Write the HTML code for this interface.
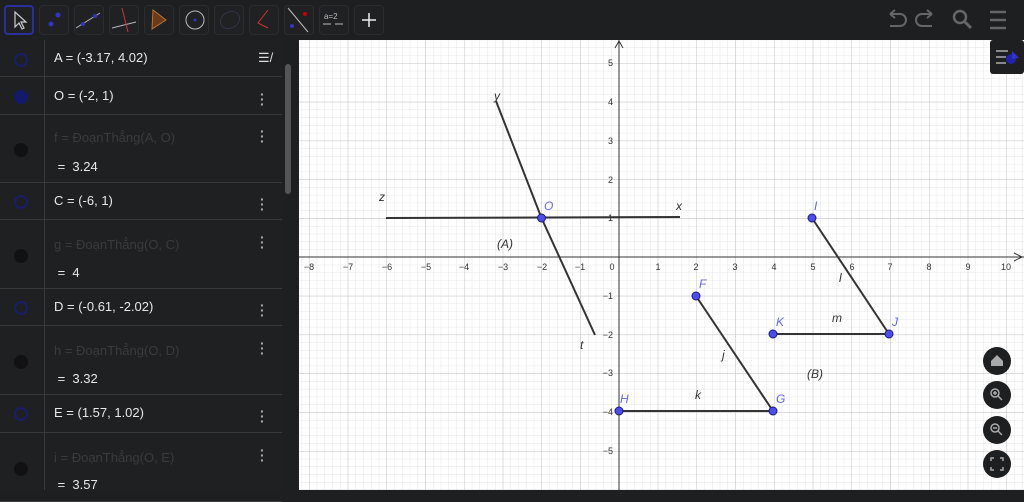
<!DOCTYPE html><html><head><meta charset="utf-8"><style>
*{margin:0;padding:0;box-sizing:border-box}
body{width:1024px;height:490px;overflow:hidden;background:#1e1f20;font-family:"Liberation Sans",sans-serif;position:relative}
#tb{position:absolute;left:0;top:0;width:1024px;height:40px;background:#1e1f20}
.btn{position:absolute;top:5px;width:30px;height:30px;border:1px solid #2c2d2f;border-radius:4px;background:#202123}
#alg{position:absolute;left:0;top:40px;width:282px;height:450px;background:#1f2022}
.row{position:absolute;left:0;width:282px;border-bottom:1px solid #38393b}
.row .t{position:absolute;left:54px;color:#e8e8e8;font-size:13px}
.row .g{color:#3a3b3d}
.row .dot{position:absolute;left:14px;width:14px;height:14px;border-radius:50%}
.row .m{position:absolute;left:260px;color:#aaa;font-size:14px;font-weight:bold;line-height:5px;width:4px}
#div{position:absolute;left:44px;top:40px;width:1px;height:450px;background:#38393b}
#sb{position:absolute;left:285px;top:64px;width:6px;height:130px;background:#555;border-radius:3px}
.zb{position:absolute;left:983px;width:28px;height:28px;border-radius:50%;background:#1e1f20}
</style></head><body>
<div id="tb">
<div class="btn" style="left:4px;border:2px solid #2a2fa0"></div>
<div class="btn" style="left:39px"></div><div class="btn" style="left:74px"></div><div class="btn" style="left:109px"></div><div class="btn" style="left:144px"></div><div class="btn" style="left:179px"></div><div class="btn" style="left:214px"></div><div class="btn" style="left:249px"></div><div class="btn" style="left:284px"></div><div class="btn" style="left:319px"></div><div class="btn" style="left:354px"></div>
</div>
<svg style="position:absolute;left:0;top:0" width="400" height="40">
<path d="M15 12 L15 27 L19 23 L22 29 L24 28 L21 22 L26 22 Z" fill="none" stroke="#ccc" stroke-width="1.2"/>
<circle cx="51" cy="24" r="2.5" fill="#33c"/><circle cx="58" cy="15" r="2.5" fill="#33c"/>
<line x1="76" y1="28" x2="100" y2="13" stroke="#bbb"/><circle cx="83" cy="24" r="2" fill="#33c"/><circle cx="95" cy="16" r="2" fill="#33c"/>
<line x1="112" y1="28" x2="136" y2="22" stroke="#bbb"/><line x1="122" y1="8" x2="128" y2="32" stroke="#c33"/>
<path d="M153 10 L166 20 L152 29 Z" fill="#6b3a1a" stroke="#b87333"/>
<circle cx="195" cy="20" r="9" fill="none" stroke="#bbb"/><circle cx="195" cy="20" r="1.5" fill="#33c"/>
<ellipse cx="230" cy="20" rx="10" ry="8" fill="none" stroke="#334" transform="rotate(-30 230 20)"/>
<path d="M268 10 L258 23 L268 28" fill="none" stroke="#c33"/>
<line x1="288" y1="8" x2="308" y2="32" stroke="#bbb"/><circle cx="305" cy="14" r="2" fill="#c00"/><circle cx="292" cy="26" r="2" fill="#33c"/>
<text x="324" y="19" fill="#bbb" font-size="8">a=2</text><line x1="323" y1="24" x2="331" y2="24" stroke="#bbb"/><line x1="335" y1="24" x2="343" y2="24" stroke="#bbb"/>
<path d="M369 13 V27 M362 20 H376" stroke="#eee" stroke-width="1.5"/>
</svg>
<svg style="position:absolute;left:880;top:0;left:880px" width="144" height="40">
<path d="M10 14 H20 A6 6 0 0 1 20 26 H10 M10 14 L15 10 M10 14 L15 18" fill="none" stroke="#666" stroke-width="2"/>
<path d="M52 14 H42 A6 6 0 0 0 42 26 H52 M52 14 L47 10 M52 14 L47 18" fill="none" stroke="#666" stroke-width="2"/>
<circle cx="80" cy="17" r="6" fill="none" stroke="#666" stroke-width="2.5"/><line x1="85" y1="22" x2="91" y2="28" stroke="#666" stroke-width="3"/>
<path d="M110 12 H126 M110 20 H126 M110 28 H126" stroke="#666" stroke-width="2.5"/>
</svg>
<div id="alg">
<div class="row" style="top:0;height:37px"><div class="dot" style="top:13px;border:2px solid #1a1d6a"></div><div class="t" style="top:10px">A = (-3.17, 4.02)</div></div>
<div class="row" style="top:37px;height:38px"><div class="dot" style="top:13px;background:#141a6a"></div><div class="t" style="top:11px">O = (-2, 1)</div><div class="m" style="top:15px">·<br>·<br>·</div></div>
<div class="row" style="top:75px;height:68px"><div class="dot" style="top:28px;background:#111"></div><div class="t g" style="top:15px">f = ĐoạnThẳng(A, O)</div><div class="t" style="top:44px">&nbsp;=&nbsp; 3.24</div><div class="m" style="top:14px">·<br>·<br>·</div></div>
<div class="row" style="top:143px;height:37px"><div class="dot" style="top:12px;border:2px solid #1a1d6a"></div><div class="t" style="top:10px">C = (-6, 1)</div><div class="m" style="top:14px">·<br>·<br>·</div></div>
<div class="row" style="top:180px;height:69px"><div class="dot" style="top:29px;background:#111"></div><div class="t g" style="top:17px">g = ĐoạnThẳng(O, C)</div><div class="t" style="top:45px">&nbsp;=&nbsp; 4</div><div class="m" style="top:15px">·<br>·<br>·</div></div>
<div class="row" style="top:249px;height:37px"><div class="dot" style="top:12px;border:2px solid #1a1d6a"></div><div class="t" style="top:10px">D = (-0.61, -2.02)</div><div class="m" style="top:14px">·<br>·<br>·</div></div>
<div class="row" style="top:286px;height:69px"><div class="dot" style="top:29px;background:#111"></div><div class="t g" style="top:17px">h = ĐoạnThẳng(O, D)</div><div class="t" style="top:45px">&nbsp;=&nbsp; 3.32</div><div class="m" style="top:15px">·<br>·<br>·</div></div>
<div class="row" style="top:355px;height:38px"><div class="dot" style="top:12px;border:2px solid #1a1d6a"></div><div class="t" style="top:10px">E = (1.57, 1.02)</div><div class="m" style="top:14px">·<br>·<br>·</div></div>
<div class="row" style="top:393px;height:69px"><div class="dot" style="top:29px;background:#111"></div><div class="t g" style="top:17px">i = ĐoạnThẳng(O, E)</div><div class="t" style="top:44px">&nbsp;=&nbsp; 3.57</div><div class="m" style="top:15px">·<br>·<br>·</div></div>
</div>
<div id="div"></div>
<div style="position:absolute;left:258px;top:42px;width:24px;height:32px;background:#1f2022;color:#ddd;font-size:13px;padding-top:8px">☰/</div>
<div id="sb"></div>
<svg style="position:absolute;left:0;top:0" width="1024" height="490">
<defs>
<pattern id="mn" patternUnits="userSpaceOnUse" x="619" y="257" width="7.75" height="7.76"><path d="M0 0 H7.75 M0 0 V7.76" stroke="#e6e6e6" stroke-width="1" fill="none"/></pattern>
<pattern id="mj" patternUnits="userSpaceOnUse" x="619" y="257" width="38.75" height="38.8"><path d="M0 0 H38.75 M0 0 V38.8" stroke="#c4c4c4" stroke-width="1" fill="none"/></pattern>
</defs>
<rect x="299" y="40" width="725" height="450" fill="#fff"/>
<rect x="299" y="40" width="725" height="450" fill="url(#mn)"/>
<rect x="299" y="40" width="725" height="450" fill="url(#mj)"/>
<line x1="299" y1="257" x2="1024" y2="257" stroke="#333"/>
<line x1="619" y1="40" x2="619" y2="490" stroke="#333"/>
<path d="M1014 253 L1022 257 L1014 261 M615 48 L619 41 L623 48" fill="none" stroke="#333"/>
<g font-size="9" fill="#333" text-anchor="middle">
<text x="309" y="270">−8</text><text x="348" y="270">−7</text><text x="387" y="270">−6</text><text x="426" y="270">−5</text><text x="464" y="270">−4</text><text x="503" y="270">−3</text><text x="542" y="270">−2</text><text x="580" y="270">−1</text><text x="612" y="270">0</text><text x="658" y="270">1</text><text x="696" y="270">2</text><text x="735" y="270">3</text><text x="774" y="270">4</text><text x="813" y="270">5</text><text x="852" y="270">6</text><text x="890" y="270">7</text><text x="929" y="270">8</text><text x="968" y="270">9</text><text x="1006" y="270">10</text>
</g>
<g font-size="9" fill="#333" text-anchor="end">
<text x="613" y="66">5</text><text x="613" y="105">4</text><text x="613" y="144">3</text><text x="613" y="183">2</text><text x="613" y="221">1</text><text x="613" y="299">−1</text><text x="613" y="338">−2</text><text x="613" y="376">−3</text><text x="613" y="415">−4</text><text x="613" y="454">−5</text>
</g>
<g stroke="#333" stroke-width="2">
<line x1="496" y1="101" x2="541.5" y2="218"/><line x1="386" y1="218" x2="680" y2="217"/><line x1="541.5" y1="218" x2="595" y2="335"/>
<line x1="696" y1="296" x2="773" y2="411"/><line x1="619" y1="411" x2="773" y2="411"/><line x1="812" y1="218" x2="889" y2="334"/><line x1="773" y1="334" x2="889" y2="334"/>
</g>
<g fill="#4d4dee" stroke="#1a1a80" stroke-width="1">
<circle cx="541.5" cy="218" r="4"/><circle cx="696" cy="296" r="4"/><circle cx="773" cy="411" r="4"/><circle cx="619" cy="411" r="4"/><circle cx="812" cy="218" r="4"/><circle cx="889" cy="334" r="4"/><circle cx="773" cy="334" r="4"/>
</g>
<g font-size="12" font-style="italic" fill="#6666ee">
<text x="544" y="210">O</text><text x="699" y="288">F</text><text x="776" y="403">G</text><text x="620" y="403">H</text><text x="814" y="210">I</text><text x="892" y="326">J</text><text x="776" y="326">K</text>
</g>
<g font-size="12" font-style="italic" fill="#333">
<text x="494" y="100">y</text><text x="379" y="201">z</text><text x="676" y="210">x</text><text x="580" y="349">t</text><text x="497" y="248">(A)</text><text x="722" y="359">j</text><text x="695" y="399">k</text><text x="839" y="282">l</text><text x="832" y="322">m</text><text x="807" y="378">(B)</text>
</g>
<rect x="990" y="40" width="34" height="34" rx="3" fill="#1e1f20"/>
<path d="M996 51 H1008 M996 57 H1006 M996 63 H1006" stroke="#888" stroke-width="2"/><circle cx="1011" cy="59" r="5" fill="#22a"/><path d="M1012 51 L1019 58 L1012 59Z" fill="#33c"/>
<g fill="#1e1f20"><circle cx="997" cy="361" r="14"/><circle cx="997" cy="395" r="14"/><circle cx="997" cy="430" r="14"/><circle cx="997" cy="464" r="14"/></g>
<path d="M991 361 L997 355 L1003 361 V366 H991Z" fill="#aaa"/>
<g fill="none" stroke="#aaa" stroke-width="1.5"><circle cx="995" cy="393" r="4"/><line x1="998" y1="396" x2="1002" y2="400"/><circle cx="995" cy="428" r="4"/><line x1="998" y1="431" x2="1002" y2="435"/><path d="M993 393 H997 M995 391 V395 M993 428 H997"/>
<path d="M991 461 V458 H994 M1000 458 H1003 V461 M1003 467 V470 H1000 M994 470 H991 V467"/></g>
</svg>
</body></html>
